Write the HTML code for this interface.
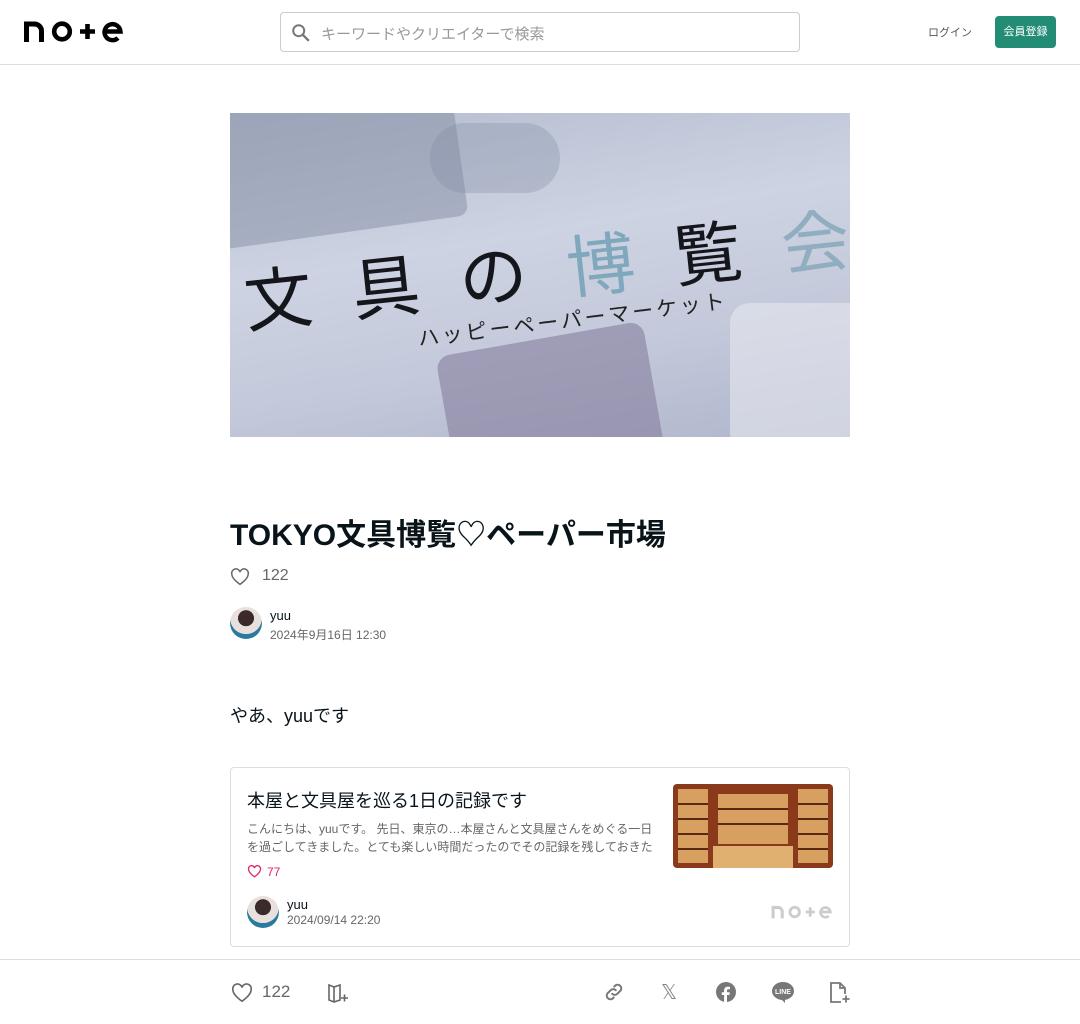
<!DOCTYPE html>
<html><head><meta charset="utf-8"><style>
*{box-sizing:border-box;margin:0;padding:0}
body{width:1080px;height:1024px;overflow:hidden;background:#fff;font-family:"Liberation Sans","Noto Sans CJK JP",sans-serif;color:#08131a;position:relative}
.hdr{position:absolute;top:0;left:0;width:1080px;height:65px;border-bottom:1px solid #ddd;background:#fff}
.search{position:absolute;left:280px;top:12px;width:520px;height:40px;border:1px solid #ccc;border-radius:4px}
.search span{position:absolute;left:40px;top:10px;font-size:15px;color:#999}
.login{position:absolute;left:928px;top:24px;font-size:11px;color:#555}
.reg{position:absolute;left:995px;top:16px;width:61px;height:32px;background:#228c75;border-radius:4px;color:#fff;font-size:11px;text-align:center;line-height:32px}
.hero{position:absolute;left:230px;top:113px;width:620px;height:324px;background:linear-gradient(170deg,#b4bccf 0%,#cdd3e2 40%,#c3c9da 70%,#b0b6cc 100%);overflow:hidden}
h1{position:absolute;left:230px;top:510px;font-size:30px;font-weight:bold;white-space:nowrap}
.g{color:#666}
.jp{font-family:"Noto Sans CJK JP",sans-serif}
</style></head><body>
<div class="hdr">
<svg style="position:absolute;left:24px;top:20px" width="100" height="23" viewBox="0 0 100 23"><path d="M2.5 22V4h8a7 7 0 0 1 7 7v11" fill="none" stroke="#000" stroke-width="5"/><circle cx="38" cy="11.5" r="7.8" fill="none" stroke="#000" stroke-width="4.6"/><path d="M56 11.5h15M63.5 4v15" stroke="#000" stroke-width="4.6"/><path d="M80.5 11.5h16a8 8 0 1 0-2.5 6.5" fill="none" stroke="#000" stroke-width="4.4"/></svg>
<div class="search"><svg style="position:absolute;left:9px;top:9px" width="22" height="22" viewBox="0 0 24 24"><circle cx="9.5" cy="9.5" r="6" fill="none" stroke="#777" stroke-width="2.2"/><path d="M14 14l6.5 6.5" stroke="#777" stroke-width="2.6"/></svg><span>キーワードやクリエイターで検索</span></div>
<div class="login">ログイン</div>
<div class="reg">会員登録</div>
</div>
<div class="hero">
<div style="position:absolute;left:-20px;top:-20px;width:250px;height:140px;background:#7e889e;opacity:.45;transform:rotate(-8deg);border-radius:10px"></div>
<div style="position:absolute;left:200px;top:10px;width:130px;height:70px;background:#7e889e;opacity:.3;border-radius:40px"></div>
<div style="position:absolute;left:215px;top:225px;width:210px;height:130px;background:#857d9c;opacity:.6;transform:rotate(-10deg);border-radius:14px"></div>
<div style="position:absolute;left:500px;top:190px;width:140px;height:150px;background:#e6e8ef;opacity:.6;border-radius:20px"></div>
<div class="jp" style="position:absolute;left:14px;top:135px;font-size:68px;letter-spacing:40px;color:#15151c;transform:rotate(-6deg);transform-origin:left center;white-space:nowrap">文具の<span style="color:#80a8bc">博</span>覧<span style="color:#90aec0">会</span></div>
<div class="jp" style="position:absolute;left:188px;top:210px;font-size:21px;letter-spacing:3px;color:#222;transform:rotate(-7deg);transform-origin:left center;white-space:nowrap">ハッピーペーパーマーケット</div>
</div>
<h1>TOKYO文具博覧♡ペーパー市場</h1>
<svg style="position:absolute;left:230px;top:568px" width="20" height="18" viewBox="0 0 24 22"><path d="M12 20S2 13.5 2 7.5A5 5 0 0 1 12 5a5 5 0 0 1 10 2.5C22 13.5 12 20 12 20z" fill="none" stroke="#666" stroke-width="1.8"/></svg>
<div style="position:absolute;left:262px;top:567px;font-size:16px" class="g">122</div>
<div style="position:absolute;left:230px;top:607px;width:32px;height:32px;border-radius:50%;background:radial-gradient(circle at 50% 35%,#3a2a2a 30%,#e8e0dc 31%,#e8e0dc 60%,#2a7aa0 61%)"></div>
<div style="position:absolute;left:270px;top:608px;font-size:13px">yuu</div>
<div style="position:absolute;left:270px;top:626px;font-size:12px" class="g">2024年9月16日 12:30</div>
<div style="position:absolute;left:230px;top:702px;font-size:18px">やあ、yuuです</div>
<div style="position:absolute;left:230px;top:767px;width:620px;height:180px;border:1px solid #ddd;border-radius:4px">
<div style="position:absolute;left:16px;top:19px;font-size:18px;white-space:nowrap">本屋と文具屋を巡る1日の記録です</div>
<div style="position:absolute;left:16px;top:52px;width:408px;font-size:12px;line-height:18px;height:36px;overflow:hidden" class="g">こんにちは、yuuです。 先日、東京の…本屋さんと文具屋さんをめぐる一日を過ごしてきました。とても楽しい時間だったのでその記録を残しておきたいと思います。TOKYOの文具の博覧会にも行ってきました。</div>
<svg style="position:absolute;left:16px;top:97px" width="15" height="13" viewBox="0 0 24 22"><path d="M12 20S2 13.5 2 7.5A5 5 0 0 1 12 5a5 5 0 0 1 10 2.5C22 13.5 12 20 12 20z" fill="none" stroke="#e0245e" stroke-width="2.2"/></svg>
<div style="position:absolute;left:36px;top:97px;font-size:12px;color:#e0245e">77</div>
<div style="position:absolute;left:16px;top:128px;width:32px;height:32px;border-radius:50%;background:radial-gradient(circle at 50% 35%,#3a2a2a 30%,#e8e0dc 31%,#e8e0dc 60%,#2a7aa0 61%)"></div>
<div style="position:absolute;left:56px;top:129px;font-size:13px">yuu</div>
<div style="position:absolute;left:56px;top:145px;font-size:12px" class="g">2024/09/14 22:20</div>
<svg style="position:absolute;left:540px;top:137px" width="62" height="14" viewBox="0 0 100 23"><path d="M2.5 22V4h8a7 7 0 0 1 7 7v11" fill="none" stroke="#ccc" stroke-width="5"/><circle cx="38" cy="11.5" r="7.8" fill="none" stroke="#ccc" stroke-width="4.6"/><path d="M56 11.5h15M63.5 4v15" stroke="#ccc" stroke-width="4.6"/><path d="M80.5 11.5h16a8 8 0 1 0-2.5 6.5" fill="none" stroke="#ccc" stroke-width="4.4"/></svg>
<svg style="position:absolute;left:442px;top:16px;border-radius:4px" width="160" height="84" viewBox="0 0 160 84"><rect width="160" height="84" fill="#8a3a1a"/><g fill="#d8a060"><rect x="5" y="5" width="30" height="74"/><rect x="125" y="5" width="30" height="74"/><rect x="45" y="10" width="70" height="50"/></g><g stroke="#5a2a10" stroke-width="2"><path d="M5 20h30M5 35h30M5 50h30M5 65h30M125 20h30M125 35h30M125 50h30M125 65h30M45 25h70M45 40h70"/></g><rect x="40" y="62" width="80" height="22" fill="#e0b070"/></svg>
</div>
<div style="position:absolute;left:0;top:959px;width:1080px;height:65px;border-top:1px solid #ddd;background:#fff">
<svg style="position:absolute;left:231px;top:23px" width="22" height="20" viewBox="0 0 24 22"><path d="M12 20S2 13.5 2 7.5A5 5 0 0 1 12 5a5 5 0 0 1 10 2.5C22 13.5 12 20 12 20z" fill="none" stroke="#666" stroke-width="1.8"/></svg>
<div style="position:absolute;left:262px;top:22px;font-size:17px" class="g">122</div>
<svg style="position:absolute;left:327px;top:22px" width="22" height="22" viewBox="0 0 22 22"><path d="M2 3l5 2 6-2v15l-6 2-5-2z M7 5v15" fill="none" stroke="#666" stroke-width="1.6"/><path d="M14 16h7M17.5 12.5v7" stroke="#666" stroke-width="1.6"/></svg>
<svg style="position:absolute;left:603px;top:21px" width="22" height="22" viewBox="0 0 24 24"><g fill="none" stroke="#777" stroke-width="2.2" stroke-linecap="round"><path d="M10 14a4 4 0 0 0 5.6 0l3.5-3.5a4 4 0 0 0-5.6-5.6l-1.2 1.2"/><path d="M14 10a4 4 0 0 0-5.6 0l-3.5 3.5a4 4 0 0 0 5.6 5.6l1.2-1.2"/></g></svg>
<div style="position:absolute;left:661px;top:20px;font-size:20px;color:#888;font-family:'DejaVu Sans',sans-serif">𝕏</div>
<svg style="position:absolute;left:716px;top:22px" width="20" height="20" viewBox="0 0 20 20"><circle cx="10" cy="10" r="10" fill="#777"/><path d="M11 20v-7h2.4l.4-2.8H11V8.6c0-.8.3-1.3 1.4-1.3h1.5V4.8a18 18 0 0 0-2.2-.1c-2.2 0-3.6 1.3-3.6 3.7v1.8H5.8V13h2.3v7z" fill="#fff"/></svg>
<svg style="position:absolute;left:772px;top:22px" width="22" height="21" viewBox="0 0 22 21"><ellipse cx="11" cy="9" rx="11" ry="9" fill="#777"/><path d="M9 17l4 4v-4z" fill="#777"/><text x="11" y="12" font-size="7" font-weight="bold" fill="#fff" text-anchor="middle" font-family="Liberation Sans">LINE</text></svg>
<svg style="position:absolute;left:829px;top:21px" width="22" height="24" viewBox="0 0 22 24"><path d="M12 21H2V2h9l5 5v6 M11 2v5h5" fill="none" stroke="#777" stroke-width="1.8"/><path d="M13.5 18h7M17 14.5v7" stroke="#777" stroke-width="1.8"/></svg>
</div>
</body></html>
